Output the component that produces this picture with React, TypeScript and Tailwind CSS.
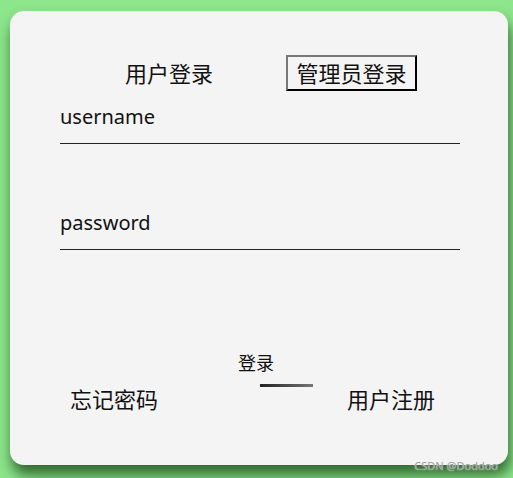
const font = { fontFamily: '"Noto Sans", "Noto Sans CJK SC", sans-serif' };

function Field({ label }: { label: string }) {
  return (
    <div className="w-[400px] border-b border-[#222] pb-[12px]">
      <span className="block text-[20px] leading-[28px] text-[#111]">{label}</span>
    </div>
  );
}

export default function App() {
  return (
    <div className="relative w-[513px] h-[478px] overflow-hidden bg-[#8de68b] pt-[11px] pl-[10px]" style={font}>
      <div className="w-[498px] h-[454px] rounded-[14px] bg-[#f4f4f4] shadow-[2px_10px_14px_rgba(10,50,10,0.7)] flex flex-col">
        <div className="flex items-center mt-[44px] pl-[115px] gap-[73px] text-[22px] text-[#111]">
          <span className="leading-[30px]">用户登录</span>
          <span className="h-[36px] w-[131px] flex items-center justify-center border-2 border-t-[#777] border-l-[#777] border-b-black border-r-black leading-none">
            管理员登录
          </span>
        </div>
        <div className="flex flex-col pl-[50px] mt-[12px] gap-[65px]">
          <Field label="username" />
          <Field label="password" />
        </div>
        <div className="flex flex-col items-center mt-[101px] pr-[6px]">
          <span className="text-[18px] leading-[24px] text-[#111]">登录</span>
          <div className="ml-[60px] mt-[9px] w-[53px] h-[3px] bg-gradient-to-r from-[#222] to-[#777]" />
        </div>
        <div className="flex justify-between pl-[60px] pr-[73px] -mt-[3px] text-[22px] leading-[30px] text-[#111]">
          <span>忘记密码</span>
          <span>用户注册</span>
        </div>
      </div>
      <span className="absolute right-[15px] bottom-[7px] text-[11px] leading-none text-[#999] [text-shadow:0_0_1px_#fff]">
        CSDN @Doddoo
      </span>
    </div>
  );
}
